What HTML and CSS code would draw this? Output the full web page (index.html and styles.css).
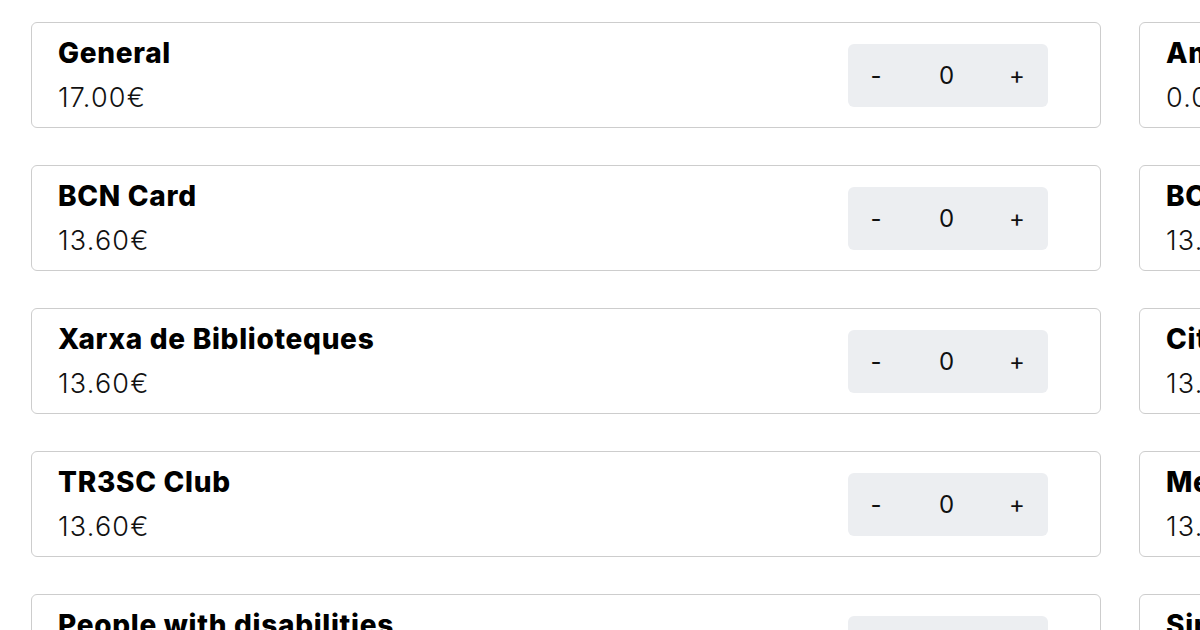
FILE: index.html
```html
<!DOCTYPE html>
<html lang="en">
<head>
<meta charset="utf-8">
<title>Tickets</title>
<link rel="stylesheet" href="styles.css">
</head>
<body>
<div class="grid">
  <div class="card"><div class="info"><div class="name">General</div><div class="price">17.00€</div></div><div class="counter"><span>-</span><span>0</span><span>+</span></div></div>
  <div class="card"><div class="info"><div class="name">Amics del Museu</div><div class="price">0.00€</div></div><div class="counter"><span>-</span><span>0</span><span>+</span></div></div>
  <div class="card"><div class="info"><div class="name">BCN Card</div><div class="price">13.60€</div></div><div class="counter"><span>-</span><span>0</span><span>+</span></div></div>
  <div class="card"><div class="info"><div class="name">BCN Card Plus</div><div class="price">13.60€</div></div><div class="counter"><span>-</span><span>0</span><span>+</span></div></div>
  <div class="card"><div class="info"><div class="name">Xarxa de Biblioteques</div><div class="price">13.60€</div></div><div class="counter"><span>-</span><span>0</span><span>+</span></div></div>
  <div class="card"><div class="info"><div class="name">Citizens of Barcelona</div><div class="price">13.60€</div></div><div class="counter"><span>-</span><span>0</span><span>+</span></div></div>
  <div class="card"><div class="info"><div class="name">TR3SC Club</div><div class="price">13.60€</div></div><div class="counter"><span>-</span><span>0</span><span>+</span></div></div>
  <div class="card"><div class="info"><div class="name">Members</div><div class="price">13.60€</div></div><div class="counter"><span>-</span><span>0</span><span>+</span></div></div>
  <div class="card"><div class="info"><div class="name">People with disabilities</div><div class="price">13.60€</div></div><div class="counter"><span>-</span><span>0</span><span>+</span></div></div>
  <div class="card"><div class="info"><div class="name">Single-parent families</div><div class="price">13.60€</div></div><div class="counter"><span>-</span><span>0</span><span>+</span></div></div>
</div>
</body>
</html>
```
FILE: styles.css
```css
html, body {
  margin: 0;
  padding: 0;
  background: #fff;
  overflow: hidden;
  height: 630px;
  width: 1200px;
}
body {
  font-family: Inter, "Noto Sans", sans-serif;
  color: #000;
}
.grid {
  display: grid;
  grid-template-columns: 1070px 1070px;
  column-gap: 38px;
  row-gap: 37px;
  padding: 22px 0 0 31px;
  width: max-content;
}
.card {
  box-sizing: border-box;
  height: 106px;
  border: 1px solid #cdcdcd;
  border-radius: 6px;
  display: flex;
  align-items: center;
  justify-content: space-between;
  padding: 0 52px 0 26px;
}
.info {
  display: flex;
  flex-direction: column;
  gap: 15px;
}
.name {
  font-size: 28px;
  line-height: 30px;
  font-weight: 800;
  letter-spacing: 0.7px;
}
.price {
  font-size: 27px;
  line-height: 30px;
  font-weight: 300;
  color: #111;
  letter-spacing: 1.2px;
}
.counter {
  width: 200px;
  height: 63px;
  background: #eceef1;
  border-radius: 6px;
  display: flex;
  align-items: center;
  justify-content: space-between;
  padding: 0 25px 0 21px;
  box-sizing: border-box;
  font-size: 24px;
  color: #111;
}
.counter span {
  width: 14px;
  text-align: center;
}
```
